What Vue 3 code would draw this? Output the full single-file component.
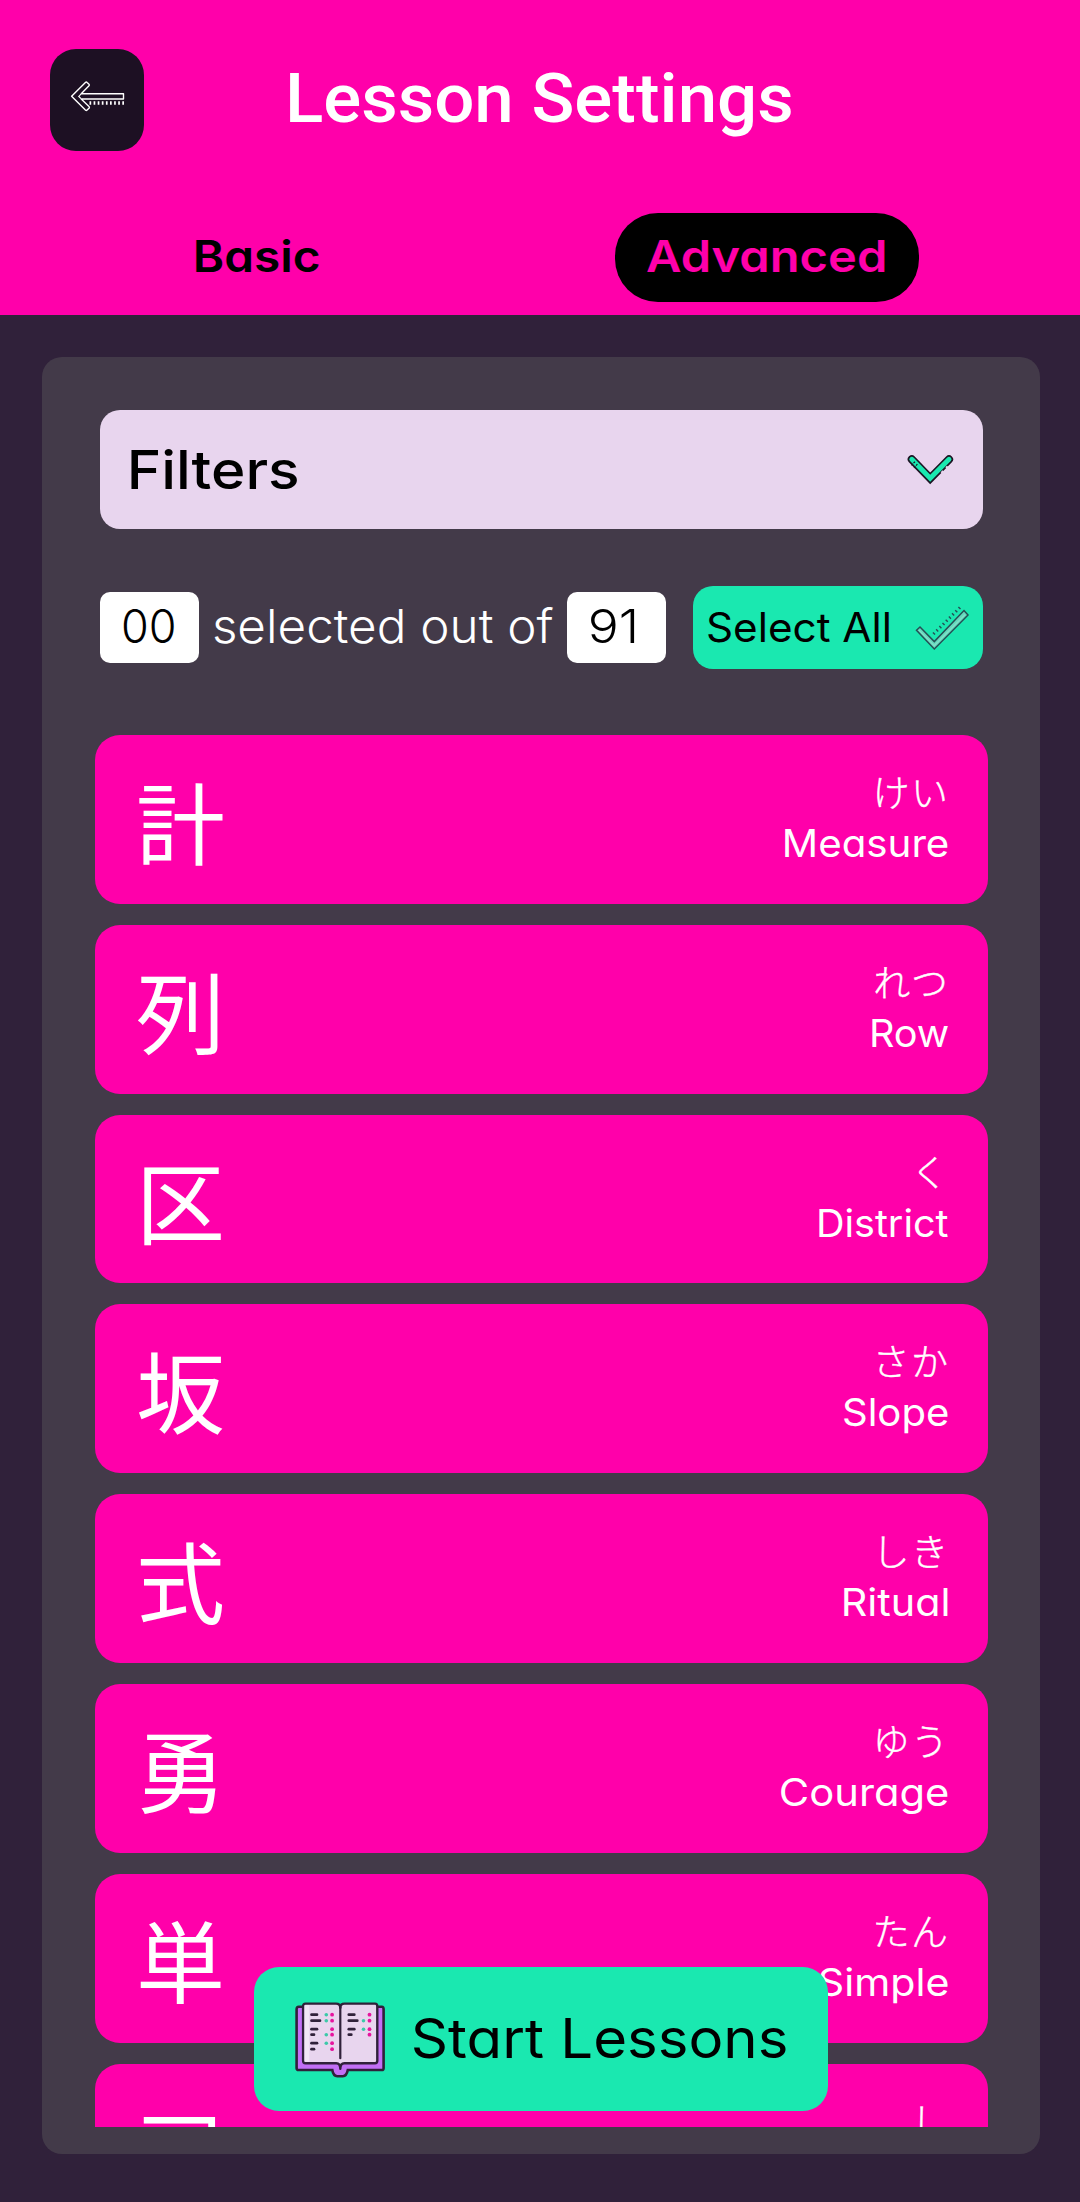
<script setup>
import { h } from 'vue'

const ctx = document.createElement('canvas').getContext('2d')

// A single line of text whose visible glyphs span exactly `w` pixels.
const FitText = (p) => {
  const family = p.family || 'Inter'
  ctx.font = `${p.weight} ${p.size}px "${family}"`
  const m = ctx.measureText(p.text)
  const ink = m.actualBoundingBoxLeft + m.actualBoundingBoxRight
  const s = p.w / ink
  return h('svg', { width: p.w, height: p.height, overflow: 'visible' }, [
    h('text', {
      x: m.actualBoundingBoxLeft * s,
      y: p.base,
      'font-family': `${family}, 'Liberation Sans', sans-serif`,
      'font-size': p.size,
      'font-weight': p.weight,
      fill: p.color,
      textLength: m.width * s,
      lengthAdjust: 'spacingAndGlyphs',
    }, p.text),
  ])
}
FitText.props = ['text', 'w', 'height', 'base', 'size', 'weight', 'color', 'family']

const cards = [
  { kanji: '計', kana: 'けい', en: 'Measure', w: 163 },
  { kanji: '列', kana: 'れつ', en: 'Row', w: 76 },
  { kanji: '区', kana: 'く', en: 'District', w: 129 },
  { kanji: '坂', kana: 'さか', en: 'Slope', w: 104 },
  { kanji: '式', kana: 'しき', en: 'Ritual', w: 104 },
  { kanji: '勇', kana: 'ゆう', en: 'Courage', w: 167 },
  { kanji: '単', kana: 'たん', en: 'Simple', w: 128 },
  { kanji: '司', kana: 'し', en: '', w: 0 },
]

const left = [
  [43, 8, 1, 1], [49, 11, 1, 1], [57.5, 8, 0, 1], [63, 5, 1, 1], [71.5, 8, 1, 1], [77.5, 5, 0, 1],
]
const right = [
  [43, 8, 0, 1], [49, 11, 1, 1], [57.5, 8, 1, 1], [63, 5, 0, 1],
]
</script>

<template>
  <div class="page">
    <header class="header">
      <div class="bar">
        <button class="back">
          <svg width="60" height="36" viewBox="68 78 60 36">
            <path d="M71.6 96.2 85.4 82.4Q86.3 81.6 87.1 82.4L89 84.2Q89.8 85 89 85.8L81.2 93.8H123.5V99H81.2L89 106.6Q89.8 107.4 89 108.2L87.1 110Q86.3 110.8 85.4 110Z" fill="none" stroke="#fff" stroke-width="1.4" stroke-linejoin="round" />
            <path d="M81 94.2 78.8 96.4 81 98.6" fill="none" stroke="#fff" stroke-width="1.2" />
            <path d="M89.5 103H124.5" stroke="#fff" stroke-width="3.4" stroke-dasharray="1.7 2.4" />
          </svg>
        </button>
        <FitText class="title" text="Lesson Settings" :w="501" :height="100" :base="73.3" :size="69.4" :weight="500" color="#fff" family="Roboto" />
      </div>
      <nav class="tabs">
        <div class="tab">
          <FitText text="Basic" :w="122.7" :height="89" :base="58.7" :size="44" :weight="600" color="#000" />
        </div>
        <div class="tab active">
          <FitText text="Advanced" :w="237.6" :height="89" :base="58.7" :size="44" :weight="600" color="#ff00aa" />
        </div>
      </nav>
    </header>

    <main class="panel">
      <div class="filters">
        <FitText text="Filters" :w="166.6" :height="119" :base="79" :size="53.6" :weight="450" color="#000" />
        <svg width="48" height="32" viewBox="906 453 48 32">
          <path d="M911.8 459.3 930.2 478.3 949 459.3" fill="none" stroke="#1b1523" stroke-width="8.2" stroke-linecap="round" />
          <path d="M911.8 459.3 930.2 478.3 949 459.3" fill="none" stroke="#1ae8b0" stroke-width="4.9" stroke-linecap="round" />
          <path d="M911.5 465.4 915.2 461.4M914 467.8 917.7 463.8" stroke="#1b1523" stroke-width="1.2" stroke-dasharray="2 1" />
          <path d="M941.3 472.9 943.2 471M946.1 468 947.6 466.4" stroke="#e8d5ee" stroke-width="2" />
        </svg>
      </div>

      <div class="selection">
        <div class="count">
          <FitText text="00" :w="51" :height="71" :base="51" :size="46.5" :weight="300" color="#000" />
        </div>
        <FitText class="label" text="selected out of" :w="339.5" :height="71" :base="51" :size="46.5" :weight="300" color="#fff" />
        <div class="count total">
          <FitText text="91" :w="44.4" :height="71" :base="51" :size="46.5" :weight="300" color="#000" />
        </div>
        <button class="select-all">
          <FitText text="Select All" :w="181" :height="83" :base="56" :size="40.6" :weight="400" color="#000" />
          <svg width="56" height="48" viewBox="914 603 56 48">
            <path d="M916.5 629.2 920 626 934.3 640.6 964 609.6 968 614 934.3 648Z" fill="#63d9bd" stroke="#254f55" stroke-width="1.5" />
            <path d="M919 629.2 934.3 644.6 965 613.6" fill="none" stroke="#86dfc8" stroke-width="1.2" />
            <path d="M933.5 633 961 605.5" stroke="#254f55" stroke-width="3" stroke-dasharray="1.4 3.1" />
          </svg>
        </button>
      </div>

      <div class="list">
        <article v-for="c in cards" :key="c.kanji" class="card">
          <span class="kanji">{{ c.kanji }}</span>
          <div class="info">
            <span class="kana">{{ c.kana }}</span>
            <FitText v-if="c.en" :text="c.en" :w="c.w" :height="50" :base="41.7" :size="38.2" :weight="400" color="#fff" />
          </div>
        </article>
      </div>
    </main>

    <button class="start">
      <svg class="book" width="90" height="76" viewBox="15.5 30 90 76">
        <path d="M19.5 35.5H102.5Q104.3 35.5 104.3 38V97Q104.3 98.8 102.5 98.8H68.5Q67.3 105 63.5 105H58Q54 105 53 98.8H19.5Q17.3 98.8 17.3 97V38Q17.3 35.5 19.5 35.5Z" transform="translate(-.2 -8.8)" fill="#c26ff5" stroke="#30213a" stroke-width="2.6" />
        <g transform="translate(0 -8.8)">
          <path d="M26 32.4H56.5Q60.8 32.4 60.8 36.5 60.8 32.4 65 32.4H95.5Q97.8 32.4 97.8 35V89.5Q97.8 92 95.5 92H64.8Q60.8 92 60.8 97.5 60.8 92 56.8 92H26Q23.6 92 23.6 89.5V35Q23.6 32.4 26 32.4Z" fill="#e8d5ee" stroke="#30213a" stroke-width="2.4" stroke-linejoin="round" />
          <path d="M27.4 34V90.5" stroke="#f1e6f5" stroke-width="4.5" />
          <path d="M60.8 36V87" stroke="#30213a" stroke-width="2.2" stroke-linecap="round" />
          <g v-for="(r, i) in left" :key="'l' + i">
            <path :d="`M37 ${r[0] + 0.5}h${r[1] - 2.5}`" transform="translate(-5 0)" stroke="#30213a" stroke-width="2.7" stroke-linecap="round" />
            <circle v-if="r[2]" cx="46.8" :cy="r[0] + 0.5" r="1.8" fill="#3cc9a9" />
            <circle cx="52.6" :cy="r[0] + 0.5" r="1.9" fill="#e6149e" />
          </g>
          <g v-for="(r, i) in right" :key="'r' + i">
            <path :d="`M69.3 ${r[0] + 0.5}h${r[1] - 2.5}`" stroke="#30213a" stroke-width="2.7" stroke-linecap="round" />
            <circle v-if="r[2]" cx="84" :cy="r[0] + 0.5" r="1.8" fill="#3cc9a9" />
            <circle cx="90" :cy="r[0] + 0.5" r="1.9" fill="#e6149e" />
          </g>
        </g>
      </svg>
      <FitText text="Start Lessons" :w="371.6" :height="144" :base="90.6" :size="54.2" :weight="400" color="#000" />
    </button>
  </div>
</template>

<style>
body {
  margin: 0;
  background: #30213a;
}
</style>

<style scoped>
.page {
  position: relative;
  display: flex;
  flex-direction: column;
  width: 1080px;
  height: 2202px;
  overflow: hidden;
  background: #30213a;
  font-family: Inter, "Liberation Sans", sans-serif;
  font-feature-settings: "cv11" 1;
}
svg {
  display: block;
  flex: none;
}
button {
  border: 0;
  padding: 0;
  font: inherit;
  font-feature-settings: inherit;
}
.header {
  box-sizing: border-box;
  flex: none;
  height: 315px;
  padding-top: 49px;
  background: #ff00aa;
}
.bar {
  display: flex;
  height: 102px;
  padding-left: 50px;
}
.back {
  display: flex;
  justify-content: center;
  width: 94px;
  height: 102px;
  padding: 29px 0 0 1.5px;
  box-sizing: border-box;
  border-radius: 26px;
  background: #1d1023;
}
.title {
  margin-left: 146.3px;
}
.tabs {
  display: flex;
  margin-top: 62px;
  padding-left: 164px;
}
.tab {
  display: flex;
  box-sizing: border-box;
  height: 89px;
  padding-left: 32px;
}
.tab.active {
  width: 304px;
  margin-left: 296.3px;
  border-radius: 43px;
  background: #000;
}
.panel {
  display: flex;
  flex-direction: column;
  box-sizing: border-box;
  width: 998px;
  height: 1797px;
  margin: 42px 0 0 42px;
  padding: 53px 52px 27px 53px;
  border-radius: 20px;
  background: #433a49;
}
.filters {
  display: flex;
  flex: none;
  align-items: center;
  justify-content: space-between;
  box-sizing: border-box;
  height: 119px;
  margin: 0 5px;
  padding: 0 29px 1px 31px;
  border-radius: 20px;
  background: #e8d5ee;
}
.selection {
  display: flex;
  flex: none;
  align-items: center;
  height: 83px;
  margin: 57px 5px 66px;
}
.count {
  display: flex;
  box-sizing: border-box;
  width: 99px;
  height: 71px;
  padding-left: 23.3px;
  border-radius: 10px;
  background: #fff;
}
.count.total {
  margin-right: 27px;
}
.label {
  margin: 0 14px 0 14.5px;
}
.select-all {
  display: flex;
  flex: 1;
  align-items: center;
  height: 83px;
  padding-left: 14.7px;
  gap: 25px;
  border-radius: 20px;
  background: #1ae8b0;
}
.list {
  display: flex;
  flex: 1;
  flex-direction: column;
  gap: 21px;
  min-height: 0;
  overflow: hidden;
}
.card {
  display: flex;
  flex: none;
  justify-content: space-between;
  box-sizing: border-box;
  height: 168.8px;
  padding: 0 40.5px 0 41px;
  border-radius: 25px;
  background: #ff00aa;
  color: #fff;
}
.kanji {
  padding-top: 34.5px;
  font: 400 89px/100px "Noto Sans CJK JP", sans-serif;
}
.info {
  display: flex;
  flex-direction: column;
  align-items: flex-end;
  padding-top: 36px;
}
.kana {
  margin: 0 -2px 4px 0;
  font: 300 37px/40px "Noto Sans CJK JP", sans-serif;
  letter-spacing: 1.5px;
  -webkit-text-stroke: 0.4px #fff;
}
.start {
  position: absolute;
  left: 254px;
  bottom: 91px;
  display: flex;
  width: 574px;
  height: 144px;
  padding-left: 41px;
  border-radius: 25px;
  background: #1ae8b0;
}
.book {
  margin: 43px 29px 0 0;
  overflow: visible;
}
</style>
